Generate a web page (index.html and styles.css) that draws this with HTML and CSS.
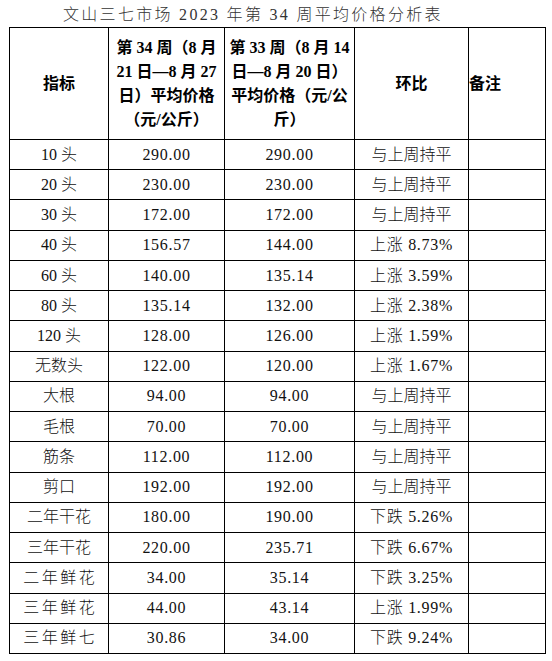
FILE: index.html
```html
<!DOCTYPE html>
<html lang="zh-CN">
<head>
<meta charset="utf-8">
<title>文山三七市场2023年第34周平均价格分析表</title>
<link rel="stylesheet" href="styles.css">
</head>
<body>
<div class="page">
  <div class="title">文山三七市场 2023 年第 34 周平均价格分析表</div>
  <table class="price">
    <colgroup>
      <col class="c1"><col class="c2"><col class="c3"><col class="c4"><col class="c5">
    </colgroup>
    <thead>
      <tr class="head">
        <th>指标</th>
        <th>第 34 周（8 月<br>21 日—8 月 27<br>日）平均价格<br>（元/公斤）</th>
        <th>第 33 周（8 月 14<br>日—8 月 20 日）<br>平均价格（元/公<br>斤）</th>
        <th>环比</th>
        <th class="left">备注</th>
      </tr>
    </thead>
    <tbody>
      <tr><td>10 头</td><td class="num">290.00</td><td class="num">290.00</td><td>与上周持平</td><td></td></tr>
      <tr><td>20 头</td><td class="num">230.00</td><td class="num">230.00</td><td>与上周持平</td><td></td></tr>
      <tr><td>30 头</td><td class="num">172.00</td><td class="num">172.00</td><td>与上周持平</td><td></td></tr>
      <tr><td>40 头</td><td class="num">156.57</td><td class="num">144.00</td><td class="num">上涨 8.73%</td><td></td></tr>
      <tr><td>60 头</td><td class="num">140.00</td><td class="num">135.14</td><td class="num">上涨 3.59%</td><td></td></tr>
      <tr><td>80 头</td><td class="num">135.14</td><td class="num">132.00</td><td class="num">上涨 2.38%</td><td></td></tr>
      <tr><td>120 头</td><td class="num">128.00</td><td class="num">126.00</td><td class="num">上涨 1.59%</td><td></td></tr>
      <tr><td>无数头</td><td class="num">122.00</td><td class="num">120.00</td><td class="num">上涨 1.67%</td><td></td></tr>
      <tr><td>大根</td><td class="num">94.00</td><td class="num">94.00</td><td>与上周持平</td><td></td></tr>
      <tr><td>毛根</td><td class="num">70.00</td><td class="num">70.00</td><td>与上周持平</td><td></td></tr>
      <tr><td>筋条</td><td class="num">112.00</td><td class="num">112.00</td><td>与上周持平</td><td></td></tr>
      <tr><td>剪口</td><td class="num">192.00</td><td class="num">192.00</td><td>与上周持平</td><td></td></tr>
      <tr><td>二年干花</td><td class="num">180.00</td><td class="num">190.00</td><td class="num">下跌 5.26%</td><td></td></tr>
      <tr><td>三年干花</td><td class="num">220.00</td><td class="num">235.71</td><td class="num">下跌 6.67%</td><td></td></tr>
      <tr><td class="wide">二年鲜花</td><td class="num">34.00</td><td class="num">35.14</td><td class="num">下跌 3.25%</td><td></td></tr>
      <tr><td class="wide">三年鲜花</td><td class="num">44.00</td><td class="num">43.14</td><td class="num">上涨 1.99%</td><td></td></tr>
      <tr><td class="wide">三年鲜七</td><td class="num">30.86</td><td class="num">34.00</td><td class="num">下跌 9.24%</td><td></td></tr>
    </tbody>
  </table>
</div>
</body>
</html>
```

FILE: styles.css
```css
html, body {
  margin: 0;
  padding: 0;
  background: #ffffff;
}

.page {
  padding-left: 9px;
  font-family: "Liberation Serif", "Noto Sans CJK SC", serif;
  color: #111111;
}

.title {
  height: 27px;
  box-sizing: border-box;
  padding-top: 2px;
  padding-left: 54px;
  font-size: 16px;
  line-height: 25px;
  letter-spacing: 2.3px;
  color: #333333;
  font-weight: 300;
  white-space: nowrap;
}

.price {
  border-collapse: collapse;
  table-layout: fixed;
  width: 537px;
}

.price col.c1 { width: 99px; }
.price col.c2 { width: 116px; }
.price col.c3 { width: 130px; }
.price col.c4 { width: 114px; }
.price col.c5 { width: 77px; }

.price th,
.price td {
  border: 1px solid #000000;
  padding: 0;
  text-align: center;
  vertical-align: middle;
  font-size: 16px;
}

.price th {
  font-weight: bold;
  line-height: 24px;
  color: #000000;
}

.price th.left {
  text-align: left;
}

.price tr.head {
  height: 112px;
}

.price tbody tr {
  height: 30.24px;
}

.price td {
  line-height: 20px;
  font-weight: 300;
  white-space: nowrap;
}

.price td.num {
  letter-spacing: 0.7px;
}

.price td.wide {
  letter-spacing: 2.5px;
  text-indent: 2.5px;
}
```
